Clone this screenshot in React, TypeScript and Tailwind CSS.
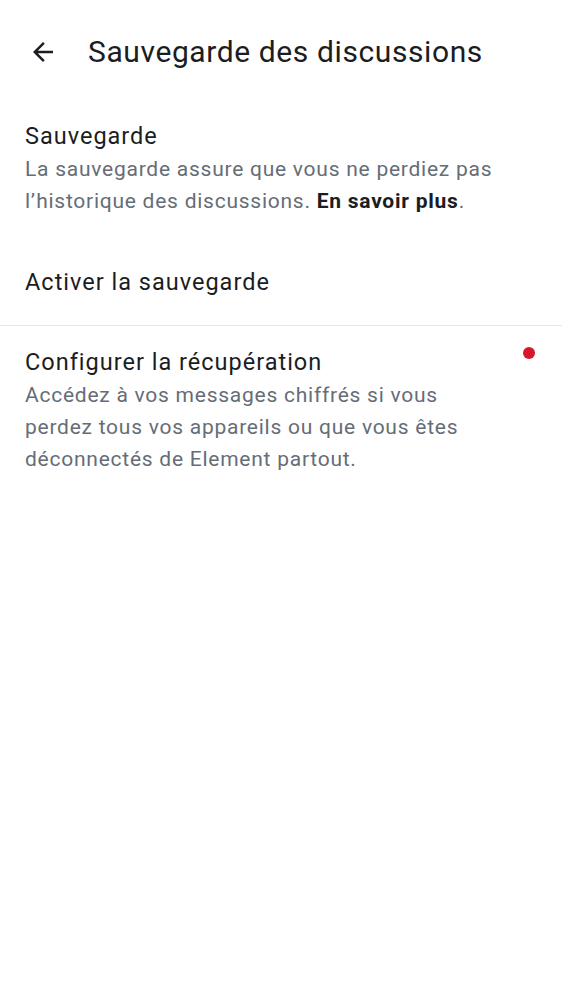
export default function App() {
  return (
    <div className="w-[562px] h-[1000px] bg-white font-['Roboto',sans-serif] text-[#1b1d22]">
      <div className="flex items-center h-[103px] pl-[28px]">
        <svg width="30" height="30" viewBox="0 0 24 24" className="shrink-0">
          <path d="M20 11H7.83l5.59-5.59L12 4l-8 8 8 8 1.41-1.41L7.83 13H20v-2z" fill="#1b1d22" />
        </svg>
        <h1 className="ml-[30px] text-[30px] leading-none tracking-[0.6px]">Sauvegarde des discussions</h1>
      </div>

      <div className="px-[25px] pt-[16px]">
        <p className="text-[23.5px] leading-[35px] tracking-[1px]">Sauvegarde</p>
        <p className="text-[21px] leading-[31.5px] text-[#656d77] tracking-[0.75px]">
          La sauvegarde assure que vous ne perdiez pas l’historique des discussions.{" "}
          <span className="font-bold text-[#1b1d22]">En savoir plus</span>.
        </p>
      </div>

      <div className="px-[25px] h-[109px] flex items-center pt-[24px] border-b border-[#e5e7ea]">
        <p className="text-[23.5px] tracking-[1px]">Activer la sauvegarde</p>
      </div>

      <div className="relative pl-[25px] pr-[70px] pt-[20px]">
        <p className="text-[23.5px] leading-[33px] tracking-[1px]">Configurer la récupération</p>
        <p className="text-[21px] leading-[32px] text-[#656d77] tracking-[0.75px]">
          Accédez à vos messages chiffrés si vous perdez tous vos appareils ou que vous êtes déconnectés de Element partout.
        </p>
        <span className="absolute right-[27px] top-[21px] w-[12px] h-[12px] rounded-full bg-[#d51928]" />
      </div>
    </div>
  );
}
